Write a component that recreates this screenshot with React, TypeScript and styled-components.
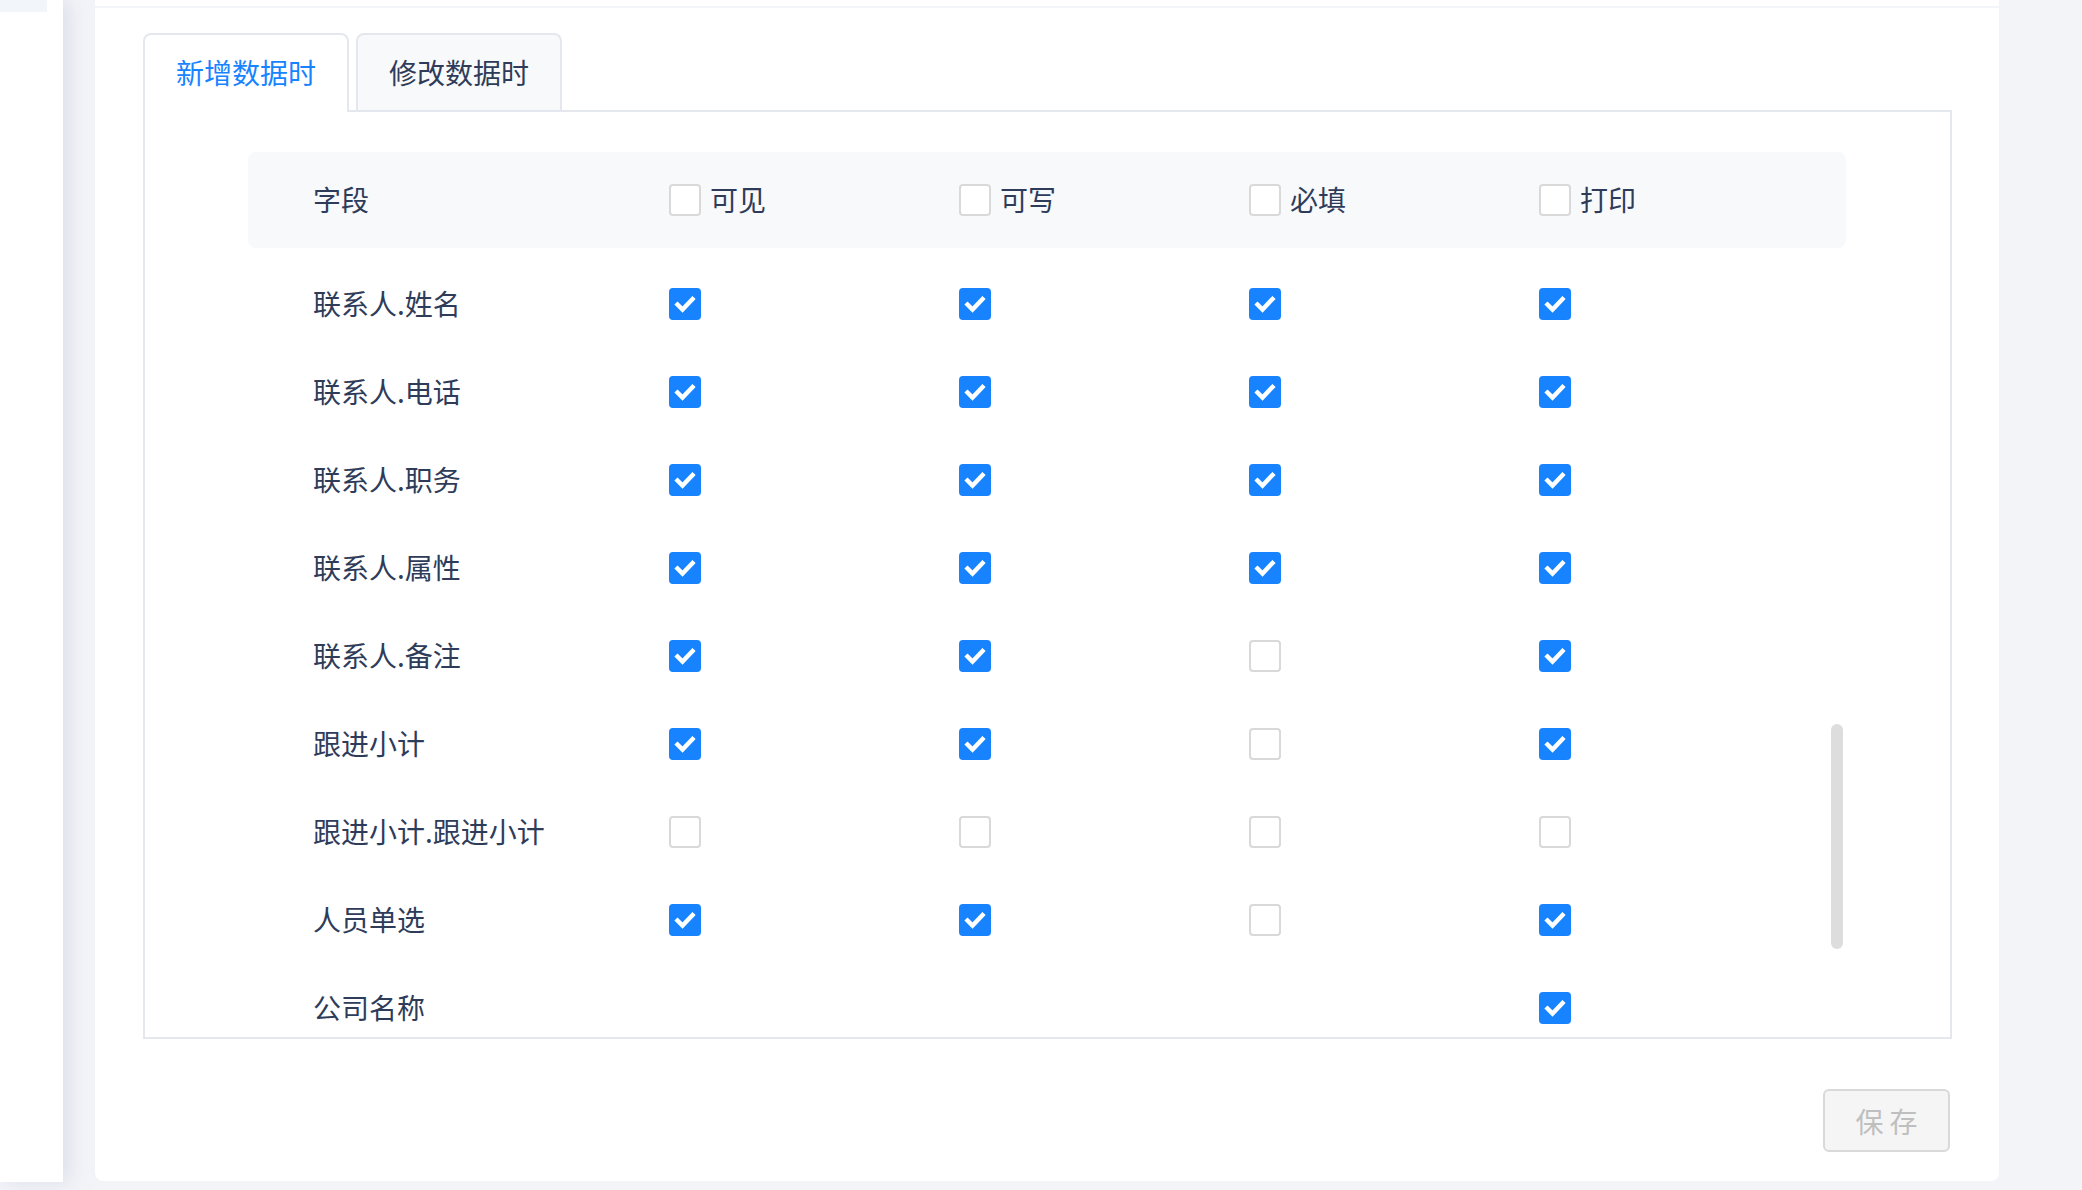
import React from 'react'
import styled, { createGlobalStyle } from 'styled-components'

const GlobalStyle = createGlobalStyle`
    html, body {
        margin: 0;
        padding: 0;
        background: #f3f4f8;
        font-family: 'Noto Sans CJK SC', 'Noto Sans', sans-serif;
        overflow: hidden;
    }
`

const Page = styled.div`
    display: flex;
    flex-direction: row;
    width: 2082px;
    height: 1190px;
    overflow: hidden;
`

const Sidebar = styled.div`
    width: 63px;
    height: 1182px;
    background: #ffffff;
    box-shadow: 6px 0 18px rgba(200, 205, 222, 0.55);
    flex-shrink: 0;
`

const MenuStub = styled.div`
    width: 47px;
    height: 12px;
    background: #f2f6fb;
`

const Main = styled.div`
    margin-left: 32px;
    width: 1904px;
    display: flex;
    flex-direction: column;
`

const TopStrip = styled.div`
    height: 6px;
    background: #ffffff;
    margin-bottom: 2px;
`

const Card = styled.div`
    height: 1173px;
    box-sizing: border-box;
    background: #ffffff;
    border-radius: 0 0 8px 8px;
    padding: 25px 47px 0 48px;
    display: flex;
    flex-direction: column;
`

const TabList = styled.div`
    display: flex;
    flex-direction: row;
    gap: 7px;
    align-items: flex-start;
`

const Tab = styled.div<{ $active?: boolean }>`
    position: relative;
    z-index: ${p => (p.$active ? 1 : 0)};
    box-sizing: border-box;
    width: 206px;
    height: ${p => (p.$active ? '79px' : '77px')};
    margin-bottom: ${p => (p.$active ? '-2px' : '0')};
    border: 2px solid #e4e7ed;
    border-bottom: none;
    border-radius: 8px 8px 0 0;
    background: ${p => (p.$active ? '#ffffff' : '#f8f9fa')};
    color: ${p => (p.$active ? '#1783ff' : '#2e3c5a')};
    font-size: 28px;
    display: flex;
    align-items: center;
    justify-content: center;
    padding-bottom: ${p => (p.$active ? '4px' : '2px')};
`

const Panel = styled.div`
    position: relative;
    box-sizing: border-box;
    height: 929px;
    border: 2px solid #e4e7ed;
    overflow: hidden;
    padding: 40px 104px 0 103px;
`

const Thumb = styled.div`
    position: absolute;
    right: 107px;
    top: 612px;
    width: 12px;
    height: 225px;
    border-radius: 6px;
    background: #dddddd;
`

const Row = styled.div<{ $head?: boolean }>`
    display: grid;
    grid-template-columns: 421px repeat(4, 290px);
    align-items: center;
    height: ${p => (p.$head ? '96px' : '88px')};
    margin-bottom: ${p => (p.$head ? '12px' : '0')};
    background: ${p => (p.$head ? '#f8f9fb' : 'transparent')};
    border-radius: 8px;
    color: #2e3c5a;
    font-size: 28px;
    line-height: 1.4;
`

const FieldName = styled.div`
    padding-left: 65px;
    padding-bottom: 1px;
    white-space: nowrap;
`

const Cell = styled.div`
    display: flex;
    align-items: center;
    gap: 9px;
`

const Box = styled.span<{ $checked?: boolean }>`
    box-sizing: border-box;
    width: 32px;
    height: 32px;
    border-radius: 4px;
    border: 2px solid ${p => (p.$checked ? '#1783ff' : '#d9d9d9')};
    background: ${p => (p.$checked ? '#1783ff' : '#ffffff')};
    display: flex;
    align-items: center;
    justify-content: center;
    flex-shrink: 0;
`

const Footer = styled.div`
    display: flex;
    justify-content: flex-end;
    padding-top: 50px;
`

const SaveButton = styled.button`
    box-sizing: border-box;
    width: 127px;
    height: 63px;
    margin-right: 2px;
    border: 2px solid #d9d9d9;
    border-radius: 6px;
    background: #f5f5f5;
    color: #bfbfbf;
    font-family: 'Noto Sans CJK SC', sans-serif;
    font-size: 28px;
    letter-spacing: 6px;
    padding: 0 0 0 6px;
    cursor: not-allowed;
`

const Checkbox = ({ checked }: { checked?: boolean }) => (
    <Box $checked={checked}>
        {checked && (
            <svg width="32" height="32" viewBox="0 0 32 32" style={{ margin: -2 }}>
                <polyline
                    points="8.5,16.5 13.5,21.5 23.5,11"
                    fill="none"
                    stroke="#ffffff"
                    strokeWidth="4.4"
                    strokeLinecap="square"
                    strokeLinejoin="miter"
                />
            </svg>
        )}
    </Box>
)

type Perm = boolean | null

const rows: { name: string; perms: Perm[] }[] = [
    { name: '联系人.姓名', perms: [true, true, true, true] },
    { name: '联系人.电话', perms: [true, true, true, true] },
    { name: '联系人.职务', perms: [true, true, true, true] },
    { name: '联系人.属性', perms: [true, true, true, true] },
    { name: '联系人.备注', perms: [true, true, false, true] },
    { name: '跟进小计', perms: [true, true, false, true] },
    { name: '跟进小计.跟进小计', perms: [false, false, false, false] },
    { name: '人员单选', perms: [true, true, false, true] },
    { name: '公司名称', perms: [null, null, null, true] },
]

const columns = ['可见', '可写', '必填', '打印']

const App = () => {
    return (
        <Page>
            <GlobalStyle />
            <Sidebar>
                <MenuStub />
            </Sidebar>
            <Main>
                <TopStrip />
                <Card>
                    <TabList>
                        <Tab $active>新增数据时</Tab>
                        <Tab>修改数据时</Tab>
                    </TabList>
                    <Panel>
                        <Row $head>
                            <FieldName>字段</FieldName>
                            {columns.map(c => (
                                <Cell key={c}>
                                    <Checkbox />
                                    <span>{c}</span>
                                </Cell>
                            ))}
                        </Row>
                        {rows.map(r => (
                            <Row key={r.name}>
                                <FieldName>{r.name}</FieldName>
                                {r.perms.map((p, i) => (
                                    <Cell key={i}>{p !== null && <Checkbox checked={p} />}</Cell>
                                ))}
                            </Row>
                        ))}
                        <Thumb />
                    </Panel>
                    <Footer>
                        <SaveButton>保存</SaveButton>
                    </Footer>
                </Card>
            </Main>
        </Page>
    )
}

export default App
